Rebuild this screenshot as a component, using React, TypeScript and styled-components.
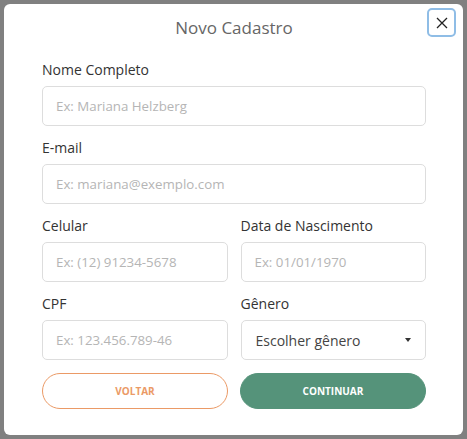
import React from 'react';
import styled, { createGlobalStyle } from 'styled-components';

const GlobalStyle = createGlobalStyle`
    body {
        margin: 0;
        background: #808080;
        font-family: 'Open Sans', 'Liberation Sans', sans-serif;
    }
`;

const Page = styled.div`
    width: 467px;
    height: 439px;
    padding: 4px 4px 0 4px;
    box-sizing: border-box;
    overflow: hidden;
`;

const ModalContainer = styled.div`
    position: relative;
    width: 459px;
    height: 431px;
    box-sizing: border-box;
    background: #fff;
    border-radius: 6px;
    padding: 0 37px 25px 38px;
`;

const ModalHeader = styled.div`
    height: 58px;
    padding-top: 14px;
    box-sizing: border-box;
    text-align: center;
    font-size: 17px;
    line-height: 20px;
    color: #666;
`;

const CloseButton = styled.button`
    position: absolute;
    top: 4px;
    right: 7px;
    width: 29px;
    height: 29px;
    padding: 0;
    display: flex;
    align-items: center;
    justify-content: center;
    background: #fff;
    border: 2px solid #8fbde6;
    border-radius: 5px;
    cursor: pointer;
`;

const Form = styled.div`
    display: flex;
    flex-direction: column;
    gap: 14px;
`;

const Row = styled.div`
    display: grid;
    grid-template-columns: minmax(0, 1fr) minmax(0, 1fr);
    column-gap: 13px;
`;

const Field = styled.div`
    display: flex;
    flex-direction: column;
    gap: 8px;
    min-width: 0;
`;

const Label = styled.label`
    font-size: 14px;
    line-height: 16px;
    color: #333;
`;

const Input = styled.input`
    width: 100%;
    height: 40px;
    box-sizing: border-box;
    border: 1px solid #ddd;
    border-radius: 5px;
    padding: 0 13px;
    font-family: inherit;
    font-size: 13.3px;
    color: #333;
    outline: none;

    &::placeholder {
        color: #b5b5b5;
    }
`;

const Select = styled.div`
    height: 40px;
    box-sizing: border-box;
    border: 1px solid #ddd;
    border-radius: 5px;
    padding: 0 14px;
    display: flex;
    align-items: center;
    justify-content: space-between;
    font-size: 14px;
    color: #444;
`;

const Caret = styled.span`
    width: 0;
    height: 0;
    border-left: 3.5px solid transparent;
    border-right: 3.5px solid transparent;
    border-top: 4px solid #333;
`;

const Buttons = styled.div`
    display: grid;
    grid-template-columns: minmax(0, 1fr) minmax(0, 1fr);
    column-gap: 12px;
    margin-top: 13px;
`;

const Button = styled.button<{ $primary?: boolean }>`
    height: 36px;
    border-radius: 18px;
    font-family: inherit;
    font-size: 10px;
    font-weight: 700;
    text-transform: uppercase;
    cursor: pointer;
    border: 1px solid ${(p) => (p.$primary ? '#55937a' : '#eb9a66')};
    background: ${(p) => (p.$primary ? '#55937a' : '#fff')};
    color: ${(p) => (p.$primary ? '#fff' : '#eb9a66')};
`;

const TextField = ({ label, placeholder }: { label: string; placeholder: string }) => (
    <Field>
        <Label>{label}</Label>
        <Input placeholder={placeholder} />
    </Field>
);

const App = () => (
    <>
        <GlobalStyle />
        <Page>
            <ModalContainer>
                <ModalHeader>Novo Cadastro</ModalHeader>
                <CloseButton aria-label="Fechar">
                    <svg width="12" height="12" viewBox="0 0 12 12">
                        <path d="M1 1L11 11M11 1L1 11" stroke="#222" strokeWidth="1.3" />
                    </svg>
                </CloseButton>
                <Form>
                    <TextField label="Nome Completo" placeholder="Ex: Mariana Helzberg" />
                    <TextField label="E-mail" placeholder="Ex: mariana@exemplo.com" />
                    <Row>
                        <TextField label="Celular" placeholder="Ex: (12) 91234-5678" />
                        <TextField label="Data de Nascimento" placeholder="Ex: 01/01/1970" />
                    </Row>
                    <Row>
                        <TextField label="CPF" placeholder="Ex: 123.456.789-46" />
                        <Field>
                            <Label>Gênero</Label>
                            <Select>
                                Escolher gênero
                                <Caret />
                            </Select>
                        </Field>
                    </Row>
                </Form>
                <Buttons>
                    <Button>Voltar</Button>
                    <Button $primary>Continuar</Button>
                </Buttons>
            </ModalContainer>
        </Page>
    </>
);

export default App;
